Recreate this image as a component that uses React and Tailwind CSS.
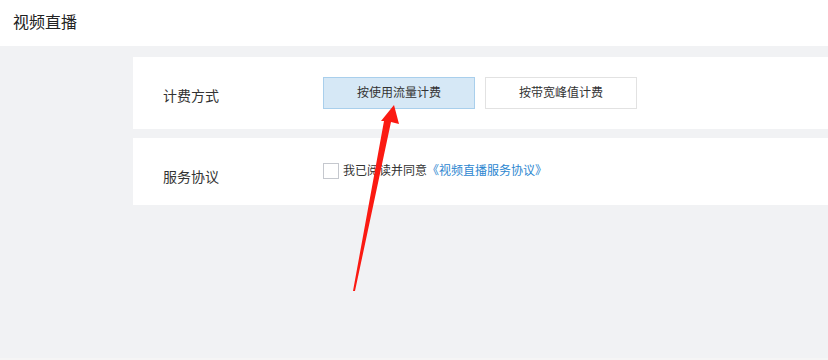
import React from "react";

const font = { fontFamily: '"Liberation Sans", "Noto Sans CJK SC", sans-serif' };

export default function App() {
  return (
    <div
      className="relative w-[828px] h-[360px] overflow-hidden bg-[#f1f2f4] flex flex-col text-[#333]"
      style={font}
    >
      <div className="h-[46px] shrink-0 bg-white flex items-center px-[13px]">
        <span className="text-[16px] leading-[20px] text-[#222]">视频直播</span>
      </div>

      <div className="flex-1 pl-[133px] pt-[11px] flex flex-col">
        <div className="h-[72px] bg-white flex items-center">
          <div className="w-[190px] pl-[30px] pt-[6px] text-[14px] leading-[20px] text-[#333]">
            计费方式
          </div>
          <div className="flex gap-[10px]">
            <button className="w-[152px] h-[32px] bg-[#d6e8f6] border border-[#a9cfec] text-[12px] leading-[16px] text-[#333]">
              按使用流量计费
            </button>
            <button className="w-[152px] h-[32px] bg-white border border-[#e2e2e2] text-[12px] leading-[16px] text-[#333]">
              按带宽峰值计费
            </button>
          </div>
        </div>

        <div className="mt-[9px] h-[67px] bg-white flex items-start">
          <div className="w-[190px] pl-[30px] pt-[29px] text-[14px] leading-[20px] text-[#333]">
            服务协议
          </div>
          <div className="pt-[25px] flex items-center">
            <span className="w-[16px] h-[16px] border border-[#c5c8ce] bg-white inline-block" />
            <span className="ml-[4px] text-[12px] leading-[16px] text-[#333]">
              我已阅读并同意
              <span className="text-[#2b86d0]">《视频直播服务协议》</span>
            </span>
          </div>
        </div>

        <div className="flex-1" />
        <div className="h-[2px] bg-[#f5f5f5] -ml-[133px]" />
      </div>

      <svg
        className="absolute left-0 top-0 pointer-events-none"
        width="828"
        height="360"
        viewBox="0 0 828 360"
      >
        <polygon
          points="394,105 399,124 391,122 355,291 353,291 384,121 381,121"
          fill="#fb1a12"
        />
      </svg>
    </div>
  );
}
